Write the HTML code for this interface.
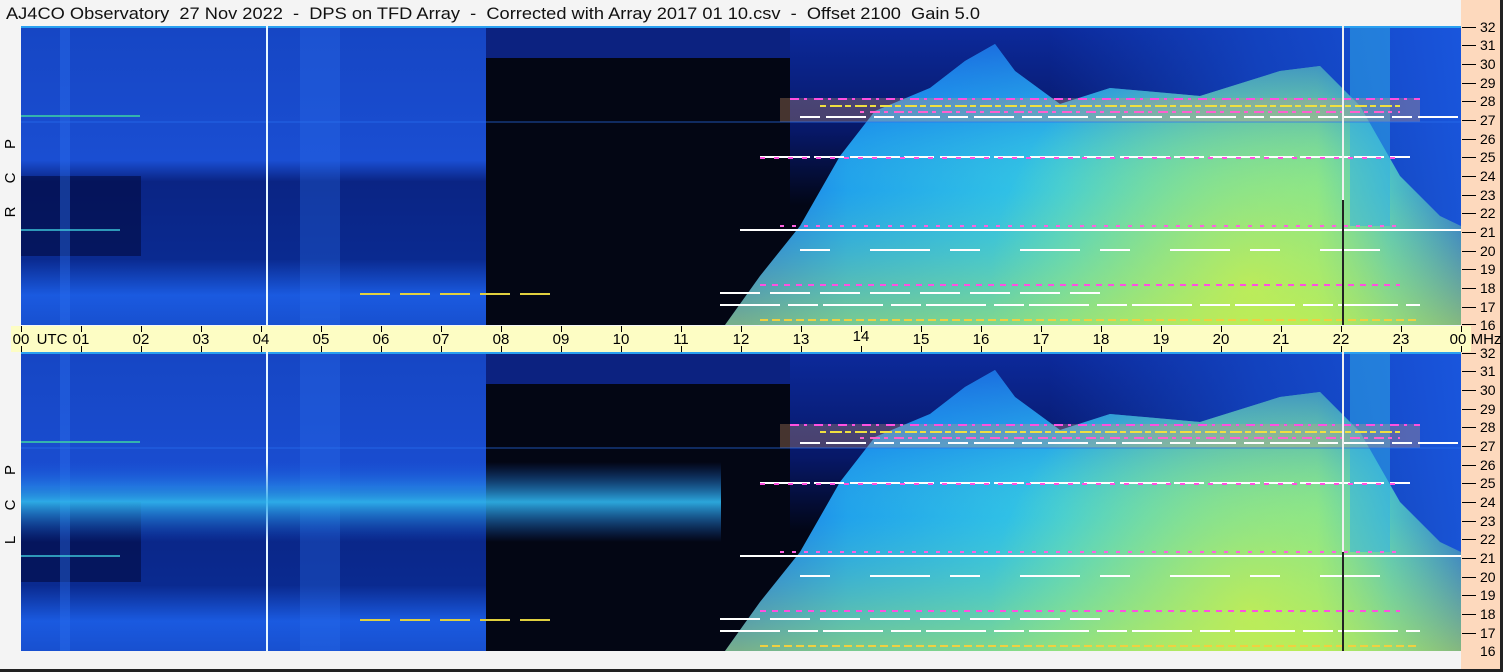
<!DOCTYPE html>
<html><head><meta charset="utf-8"><style>
html,body{margin:0;padding:0;background:#f4f4f4;}
body{width:1503px;height:672px;overflow:hidden;position:relative;font-family:"Liberation Sans",sans-serif;}
</style></head><body>
<svg width="1503" height="672" viewBox="0 0 1503 672" xmlns="http://www.w3.org/2000/svg" style="position:absolute;left:0;top:0">
<defs>
<linearGradient id="leftv" x1="0" y1="0" x2="0" y2="1">
<stop offset="0" stop-color="#1646c4"/><stop offset="0.45" stop-color="#1a4ed2"/>
<stop offset="0.52" stop-color="#0a2484"/><stop offset="0.78" stop-color="#0a2a90"/>
<stop offset="0.9" stop-color="#1a5ae0"/><stop offset="1" stop-color="#1850d0"/>
</linearGradient>
<linearGradient id="rightTop" x1="0" y1="0" x2="0" y2="1">
<stop offset="0" stop-color="#0c2a9c"/><stop offset="0.35" stop-color="#071868"/><stop offset="0.6" stop-color="#020616"/><stop offset="1" stop-color="#020410"/>
</linearGradient>
<linearGradient id="rightSide" x1="1050" y1="0" x2="1461" y2="0" gradientUnits="userSpaceOnUse">
<stop offset="0" stop-color="#1448c8" stop-opacity="0"/><stop offset="0.5" stop-color="#1448c8" stop-opacity="0.8"/><stop offset="1" stop-color="#1a58e0" stop-opacity="0.95"/>
</linearGradient>
<linearGradient id="tri" x1="740" y1="0" x2="1461" y2="0" gradientUnits="userSpaceOnUse">
<stop offset="0" stop-color="#1460e8"/><stop offset="0.15" stop-color="#1a9cf0"/>
<stop offset="0.45" stop-color="#30c8e8"/><stop offset="0.8" stop-color="#60e0b0"/>
<stop offset="0.9" stop-color="#20b0f0"/><stop offset="1" stop-color="#1860e0"/>
</linearGradient>
<linearGradient id="triv" x1="0" y1="0" x2="0" y2="299" gradientUnits="userSpaceOnUse">
<stop offset="0" stop-color="#1448d8" stop-opacity="0.8"/><stop offset="0.3" stop-color="#1a70e8" stop-opacity="0.35"/>
<stop offset="0.55" stop-color="#60e0c0" stop-opacity="0.1"/><stop offset="1" stop-color="#c8f040" stop-opacity="0.55"/>
</linearGradient>
<radialGradient id="yel" cx="1250" cy="260" r="260" gradientUnits="userSpaceOnUse">
<stop offset="0" stop-color="#d8f040" stop-opacity="0.7"/><stop offset="1" stop-color="#d8f040" stop-opacity="0"/>
</radialGradient>
<linearGradient id="cyanband" x1="0" y1="0" x2="0" y2="1">
<stop offset="0" stop-color="#1a60e0" stop-opacity="0"/><stop offset="0.5" stop-color="#30b8f0"/><stop offset="1" stop-color="#1a60e0" stop-opacity="0"/>
</linearGradient>
<clipPath id="tc"><polygon points="725,299 760,250 800,200 840,130 875,85 930,62 965,35 995,18 1015,45 1060,78 1110,62 1200,70 1280,45 1320,40 1360,80 1400,150 1440,190 1461,200 1461,299"/></clipPath>
<g id="panel">
<rect x="21" y="0" width="1440" height="299" fill="#020410"/>
<rect x="21" y="0" width="465" height="299" fill="url(#leftv)"/>
<rect x="21" y="150" width="120" height="80" fill="#020a40" opacity="0.6"/>
<rect x="60" y="0" width="10" height="299" fill="#2a70f0" opacity="0.4"/>
<rect x="300" y="0" width="40" height="299" fill="#2a70f0" opacity="0.3"/>
<rect x="486" y="0" width="304" height="299" fill="#030614"/>
<rect x="486" y="0" width="304" height="32" fill="#0c2280"/>
<rect x="790" y="0" width="671" height="299" fill="url(#rightTop)"/>
<rect x="1050" y="0" width="411" height="299" fill="url(#rightSide)"/>
<g clip-path="url(#tc)">
<rect x="700" y="0" width="761" height="299" fill="url(#tri)"/>
<rect x="700" y="0" width="761" height="299" fill="url(#triv)"/>
<rect x="700" y="0" width="761" height="299" fill="url(#yel)"/>
</g>
<rect x="1350" y="0" width="40" height="200" fill="#30b0e8" opacity="0.5"/>
<rect x="21" y="0" width="1440" height="2" fill="#2aa0f0"/>
<rect x="780" y="72" width="640" height="24" fill="#e0a070" opacity="0.3"/>
<g stroke-width="2" fill="none">
<line x1="790" y1="73" x2="1420" y2="73" stroke="#ff50e0" stroke-dasharray="9 5 3 7"/>
<line x1="820" y1="80" x2="1400" y2="80" stroke="#f0e040" stroke-dasharray="6 4 12 3"/>
<line x1="860" y1="86" x2="1400" y2="86" stroke="#ff60d0" stroke-dasharray="4 6 10 4"/>
<line x1="800" y1="91" x2="1460" y2="91" stroke="#ffffff" stroke-dasharray="20 6 40 8"/>
<line x1="760" y1="131" x2="1410" y2="131" stroke="#ffffff" stroke-dasharray="50 4 30 6"/>
<line x1="760" y1="132" x2="1400" y2="132" stroke="#ff50e0" stroke-dasharray="5 9"/>
<line x1="740" y1="204" x2="1461" y2="204" stroke="#ffffff"/>
<line x1="780" y1="200" x2="1400" y2="200" stroke="#ff60e0" stroke-dasharray="4 8"/>
<line x1="800" y1="224" x2="1400" y2="224" stroke="#ffffff" stroke-dasharray="30 40 60 20"/>
<line x1="760" y1="259" x2="1400" y2="259" stroke="#ff50e0" stroke-dasharray="6 6"/>
<line x1="720" y1="267" x2="1100" y2="267" stroke="#ffffff" stroke-dasharray="40 10"/>
<line x1="720" y1="279" x2="1420" y2="279" stroke="#ffffff" stroke-dasharray="60 8 30 5"/>
<line x1="760" y1="294" x2="1420" y2="294" stroke="#f0d040" stroke-dasharray="8 4"/>
<line x1="360" y1="268" x2="560" y2="268" stroke="#e0d040" stroke-dasharray="30 10"/>
<line x1="21" y1="90" x2="140" y2="90" stroke="#40e0a0" opacity="0.7"/>
<line x1="21" y1="204" x2="120" y2="204" stroke="#40d0e0" opacity="0.7"/>
<line x1="21" y1="96" x2="1461" y2="96" stroke="#2a70f0" opacity="0.7" stroke-width="1"/>
</g>
<rect x="266" y="0" width="2" height="299" fill="#e8f8ff"/>
<rect x="1342" y="0" width="2" height="299" fill="#f0f0f0"/>
</g>
</defs>
<text x="6" y="19" font-size="17" fill="#111" style="white-space:pre" textLength="974" lengthAdjust="spacingAndGlyphs" font-family="Liberation Sans, sans-serif">AJ4CO Observatory  27 Nov 2022  -  DPS on TFD Array  -  Corrected with Array 2017 01 10.csv  -  Offset 2100  Gain 5.0</text>
<rect x="1461" y="0" width="39" height="672" fill="#fdd9bd"/>
<rect x="1500" y="0" width="3" height="672" fill="#222"/>
<rect x="0" y="669" width="1503" height="3" fill="#222"/>
<use href="#panel" transform="translate(0,26)"/>
<g transform="translate(0,352)">
<use href="#panel"/>
<rect x="21" y="110" width="700" height="80" fill="url(#cyanband)" opacity="0.9"/>
<rect x="1342" y="200" width="2" height="99" fill="#222"/>
</g>
<rect x="1342" y="200" width="2" height="125" fill="#222"/>
<rect x="11" y="326" width="1460" height="26" fill="#fdfdc4"/>
<g font-size="15" fill="#000" font-family="Liberation Sans, sans-serif" text-anchor="middle">
<text x="21" y="344">00</text><text x="52" y="344">UTC</text>
<text x="81" y="344">01</text><text x="141" y="344">02</text><text x="201" y="344">03</text><text x="261" y="344">04</text>
<text x="321" y="344">05</text><text x="381" y="344">06</text><text x="441" y="344">07</text><text x="501" y="344">08</text>
<text x="561" y="344">09</text><text x="621" y="344">10</text><text x="681" y="344">11</text><text x="741" y="344">12</text>
<text x="801" y="344">13</text><text x="861" y="341">14</text><text x="921" y="344">15</text><text x="981" y="344">16</text>
<text x="1041" y="344">17</text><text x="1101" y="344">18</text><text x="1161" y="344">19</text><text x="1221" y="344">20</text>
<text x="1281" y="344">21</text><text x="1341" y="344">22</text><text x="1401" y="344">23</text><text x="1458" y="344">00</text>
<text x="1486" y="344">MHz</text>
</g>
<g stroke="#000" stroke-width="1">
<path d="M21.5 326v6M81.5 326v6M141.5 326v6M201.5 326v6M261.5 326v6M321.5 326v6M381.5 326v6M441.5 326v6M501.5 326v6M561.5 326v6M621.5 326v6M681.5 326v6M741.5 326v6M801.5 326v6M861.5 326v6M921.5 326v6M981.5 326v6M1041.5 326v6M1101.5 326v6M1161.5 326v6M1221.5 326v6M1281.5 326v6M1341.5 326v6M1401.5 326v6M1461.5 326v6"/>
<path d="M21.5 346v6M81.5 346v6M141.5 346v6M201.5 346v6M261.5 346v6M321.5 346v6M381.5 346v6M441.5 346v6M501.5 346v6M561.5 346v6M621.5 346v6M681.5 346v6M741.5 346v6M801.5 346v6M861.5 346v6M921.5 346v6M981.5 346v6M1041.5 346v6M1101.5 346v6M1161.5 346v6M1221.5 346v6M1281.5 346v6M1341.5 346v6M1401.5 346v6M1461.5 346v6"/>
</g>
<g font-size="14" fill="#000" font-family="Liberation Sans, sans-serif">
<g id="fax">
<text x="1480" y="32">32</text><text x="1480" y="50">31</text><text x="1480" y="69">30</text><text x="1480" y="88">29</text>
<text x="1480" y="106">28</text><text x="1480" y="125">27</text><text x="1480" y="144">26</text><text x="1480" y="162">25</text>
<text x="1480" y="181">24</text><text x="1480" y="200">23</text><text x="1480" y="218">22</text><text x="1480" y="237">21</text>
<text x="1480" y="256">20</text><text x="1480" y="274">19</text><text x="1480" y="293">18</text><text x="1480" y="312">17</text>
<text x="1480" y="330">16</text>
<path stroke="#000" d="M1462 27.5h14M1462 45.5h14M1462 64.5h14M1462 83.5h14M1462 101.5h14M1462 120.5h14M1462 139.5h14M1462 157.5h14M1462 176.5h14M1462 195.5h14M1462 213.5h14M1462 232.5h14M1462 251.5h14M1462 269.5h14M1462 288.5h14M1462 307.5h14"/>
</g>
<use href="#fax" transform="translate(0,326)"/>
</g>
<rect x="1462" y="324" width="14" height="1" fill="#000"/>
<g font-size="15" fill="#000" font-family="Liberation Sans, sans-serif" text-anchor="middle">
<text transform="translate(15,144) rotate(-90)">P</text>
<text transform="translate(15,178) rotate(-90)">C</text>
<text transform="translate(15,212) rotate(-90)">R</text>
<text transform="translate(15,470) rotate(-90)">P</text>
<text transform="translate(15,505) rotate(-90)">C</text>
<text transform="translate(15,540) rotate(-90)">L</text>
</g>
</svg>
</body></html>
